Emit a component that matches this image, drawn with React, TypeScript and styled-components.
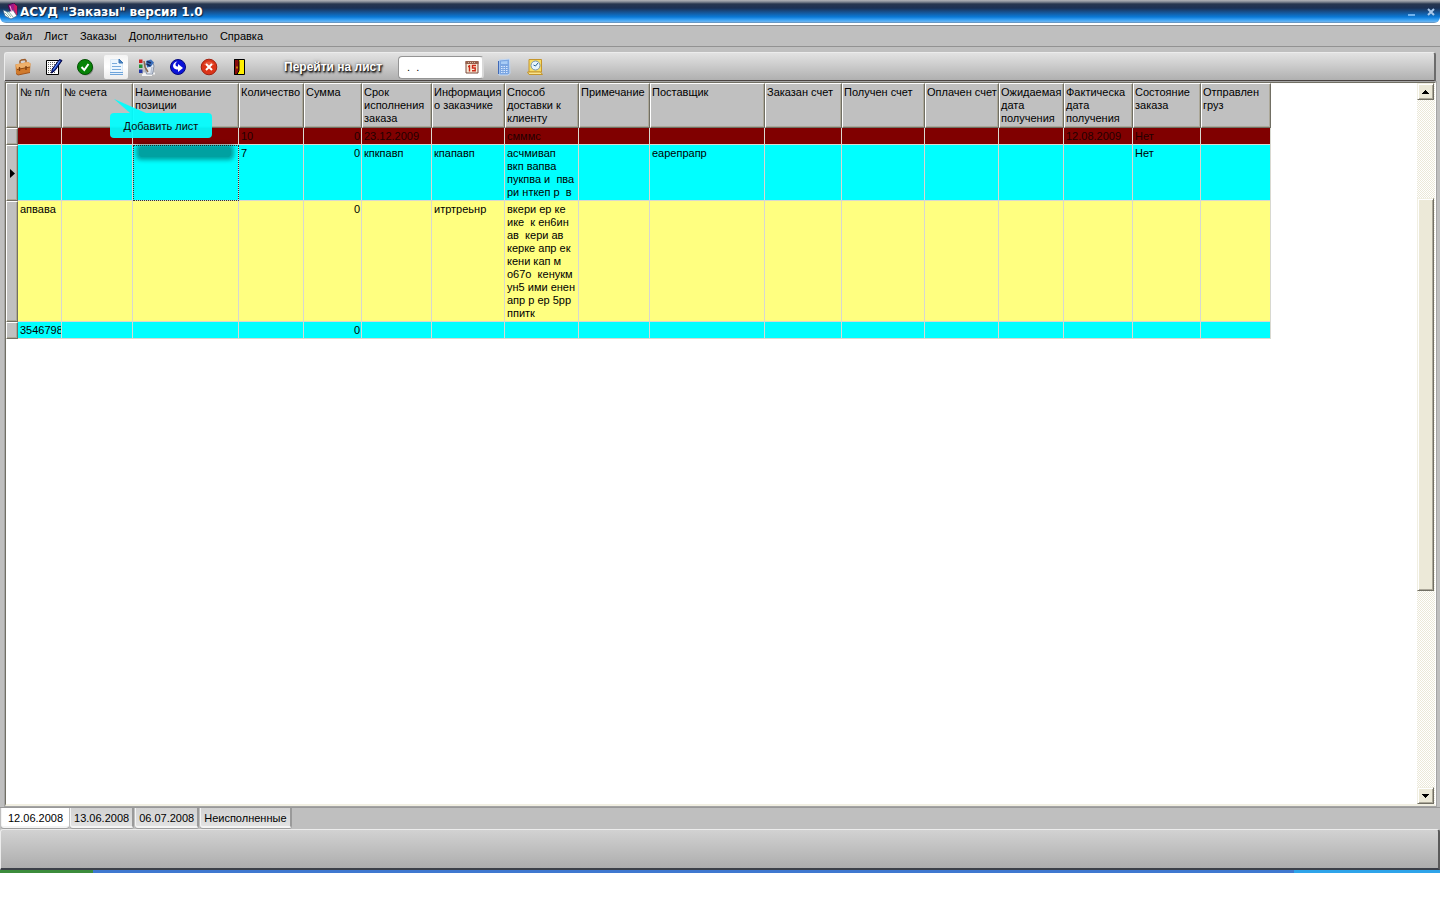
import React from "react";
import styled, { createGlobalStyle, css } from "styled-components";

const Global = createGlobalStyle`
  html, body, #root { height: 100%; }
  body {
    margin: 0;
    background: #fff;
    font-family: "Liberation Sans", Arial, sans-serif;
    font-size: 11px;
    line-height: 13px;
    color: #000;
  }
  *, *::before, *::after { box-sizing: border-box; }
  button, input { font: inherit; color: inherit; margin: 0; }
`;

const Screen = styled.div`
  display: flex;
  flex-direction: column;
  min-height: 100%;
  padding-bottom: 27px;
`;

const Window = styled.main`
  flex: 1;
  display: flex;
  flex-direction: column;
  background: #bfbfbf;
`;

const TitleBar = styled.header`
  display: flex;
  align-items: center;
  height: 23px;
  padding: 0 0 0 3px;
  border-radius: 0 0 6px 6px;
  background: linear-gradient(#b4b6ba 0, #7d8490 2px, #27364f 4px, #1c3154 8px, #17518f 12px, #0a7ad8 17px, #3fa4f4 20px, #6fb4ee 22px, #5c7c9c 23px);
`;

const TitleWrap = styled.div`
  padding-bottom: 2px;
  background: #fff;
  border-bottom: 1px solid #8c8c8c;
`;

const Title = styled.h1`
  flex: 1;
  margin: 0 0 0 2px;
  font-family: "DejaVu Sans", Verdana, sans-serif;
  font-size: 12px;
  line-height: 22px;
  font-weight: bold;
  color: #fff;
  text-shadow: 1px 1px 1px #10203c;
`;

const CaptionButton = styled.button`
  display: flex;
  width: 19px;
  height: 19px;
  padding: 0;
  border: 0;
  background: none;
  align-items: center;
  justify-content: center;
`;

const MenuBar = styled.nav`
  display: flex;
  gap: 12px;
  height: 21px;
  padding: 4px 5px;
  border-bottom: 1px solid #929292;
`;

const MenuItem = styled.button`
  padding: 0;
  border: 0;
  background: none;
`;

const Toolbar = styled.div`
  display: flex;
  align-items: center;
  height: 30px;
  margin: 5px 4px 0;
  padding: 1px 6px 0;
  border: 1px solid #ececec;
  border-right: 2px solid #6c6c6c;
  border-bottom: 2px solid #4a4442;
  border-radius: 3px 3px 0 0;
  background: linear-gradient(#e2e2e2, #cfcfcf 40%, #b0b0b0);
`;

const ToolGroup = styled.div`
  display: flex;
  gap: 7px;
`;

const ToolSlot = styled.div`
  position: relative;
`;

const ToolButton = styled.button<{ $hot?: boolean }>`
  display: flex;
  align-items: center;
  justify-content: center;
  width: 24px;
  height: 24px;
  padding: 0;
  border: 0;
  border-radius: 2px;
  background: ${(p) => (p.$hot ? "linear-gradient(#f4f4f4, #fff 50%, #ececec)" : "none")};
`;

const GotoLabel = styled.label`
  margin: 0 16px 0 32px;
  font-size: 12px;
  font-weight: bold;
  color: #fff;
  text-shadow: 1px 1px 1px #222, 1px 2px 2px #333, 0 0 3px #555;
`;

const DateField = styled.div`
  display: flex;
  align-items: center;
  width: 86px;
  height: 23px;
  margin-right: 8px;
  padding: 0 3px 0 8px;
  border: 1px solid #949494;
  border-right: 2px solid #d8d8d8;
  border-radius: 4px;
  background: #fff;
`;

const DateInput = styled.input`
  flex: 1;
  min-width: 0;
  padding: 0;
  border: 0;
  outline: 0;
  background: none;
  white-space: pre;
`;

const PickButton = styled.button`
  display: flex;
  padding: 0;
  border: 0;
  background: none;
`;

const Tip = styled.div`
  position: absolute;
  z-index: 2;
  left: 6px;
  top: 44px;
  width: 102px;
  opacity: 0.93;
  svg { display: block; }
`;

const TipText = styled.div`
  height: 25px;
  line-height: 27px;
  border-radius: 4px;
  background: #00ffff;
  text-align: center;
  white-space: nowrap;
`;

const TipShadow = styled.div`
  position: absolute;
  z-index: 1;
  left: 35px;
  top: 92px;
  width: 92px;
  height: 10px;
  border-radius: 2px;
  background: rgba(0, 0, 0, 0.37);
  box-shadow: 0 0 4px 3px rgba(0, 0, 0, 0.37);
`;

const GridArea = styled.section`
  flex: 1;
  display: flex;
  margin: 0 4px 0 5px;
  border: 1px solid #716f64;
  border-right-color: #fff;
  border-bottom: 2px solid #f1efe2;
  background: #fff;
  outline: 1px solid #a4a4a4;
  min-height: 400px;
`;

const GridScroll = styled.div`
  flex: 1;
  min-width: 0;
  overflow: hidden;
`;

const Table = styled.table`
  table-layout: fixed;
  width: 1265px;
  border-collapse: separate;
  border-spacing: 0;
`;

const raised = css`
  background: #c0c0c0;
  border: 1px solid #fff;
  border-right-color: #716f64;
  border-bottom-color: #716f64;
  box-shadow: inset -1px -1px 0 #aca899;
`;

const HeadCell = styled.th`
  ${raised}
  height: 45px;
  padding: 2px 0 2px 1px;
  font-weight: normal;
  text-align: left;
  vertical-align: top;
  white-space: pre;
  overflow: hidden;
`;

const Marker = styled.th`
  ${raised}
  padding: 0;
  text-align: center;
  vertical-align: middle;
  svg { display: block; margin: auto; }
`;

type Tone = "overdue" | "cyan" | "yellow";
const tones: Record<Tone, string> = { overdue: "#800000", cyan: "#00ffff", yellow: "#ffff80" };

const Row = styled.tr<{ $tone: Tone }>`
  background: ${(p) => tones[p.$tone]};
  color: ${(p) => (p.$tone === "overdue" ? "#240000" : "#000")};
`;

const Cell = styled.td<{ $num?: boolean; $focus?: boolean }>`
  padding: 2px 1px 1px 2px;
  border-right: 1px solid #d8d8d0;
  border-bottom: 1px solid #d8d8d0;
  vertical-align: top;
  text-align: ${(p) => (p.$num ? "right" : "left")};
  white-space: pre;
  overflow: hidden;
  height: 17px;
  ${(p) => p.$focus && css`
    outline: 1px dotted #303030;
    outline-offset: -1px;
  `}
`;

const ScrollBar = styled.div`
  display: flex;
  flex-direction: column;
  width: 18px;
  padding-right: 1px;
  background: repeating-conic-gradient(#fff 0 25%, #ebe8d8 0 50%) 0 0 / 2px 2px;
`;

const bevel = css`
  background: #ece9d8;
  border: 1px solid #f1efe2;
  border-right-color: #716f64;
  border-bottom-color: #716f64;
  box-shadow: inset 1px 1px 0 #fff, inset -1px -1px 0 #aca899;
`;

const ScrollButton = styled.button`
  ${bevel}
  display: flex;
  align-items: center;
  justify-content: center;
  height: 17px;
  padding: 0;
`;

const ScrollTrack = styled.div`
  flex: 1;
  display: flex;
  flex-direction: column;
`;

const ScrollGap = styled.div<{ $part: number }>`
  flex: ${(p) => p.$part};
`;

const ScrollThumb = styled.div`
  ${bevel}
  flex: 393;
`;

const Tabs = styled.div`
  display: flex;
  gap: 1px;
  height: 22px;
  margin-top: 1px;
  padding-left: 1px;
  border-top: 1px solid #989898;
`;

const Tab = styled.button<{ $active?: boolean }>`
  height: 20px;
  padding: 2px 3px 0;
  border: 1px solid #f4f4f4;
  border-top: 0;
  border-right: 2px solid #9a9a9a;
  border-bottom-width: 2px;
  border-radius: 0 0 3px 3px;
  background: linear-gradient(#d2d2d2, #e2e2e2);
  box-shadow: 0 1px 0 #a0a0a0;
  ${(p) => p.$active && css`
    padding: 2px 4px 0 6px;
    background: #fff;
    border-right-color: #fff;
  `}
`;

const StatusBar = styled.footer`
  height: 41px;
  border: 1px solid #ececec;
  border-right: 2px solid #5a5a5a;
  border-bottom: 2px solid #3c4048;
  border-radius: 3px 3px 0 0;
  background: linear-gradient(#d2d2d2, #adadad);
`;

const Taskbar = styled.div`
  display: grid;
  grid-template-columns: 93px 1fr 146px;
  height: 3px;
`;

const TaskPart = styled.div<{ $tint: string }>`
  background: ${(p) => p.$tint};
`;

const Svg = ({ size = 18, children }: { size?: number; children: React.ReactNode }) => (
  <svg width={size} height={size} viewBox="0 0 18 18" aria-hidden="true">{children}</svg>
);

const BagIcon = () => (
  <Svg>
    <path d="M6 5.500V3L7.500 2 11 1.500l1 1V4.500" fill="none" stroke="#9a5a28" strokeWidth="1.400" />
    <path d="M1.500 6.500L14 4l2.500 1.500-.5 9L4 17l-2-1.500z" fill="#d07a2c" />
    <path d="M1.500 6.500L14 4l2.500 1.500L16 9 3 11z" fill="#eeb06a" />
    <path d="M3 11.500l13-2.500" stroke="#8f4a14" fill="none" />
    <path d="M5.500 9v4M12 8v4" stroke="#7b3d10" strokeWidth="1.300" fill="none" />
    <path d="M2 15.500L4 17l12-2.500" stroke="#a3541a" fill="none" />
  </Svg>
);

const EditIcon = () => (
  <Svg>
    <path d="M1.500 2.500h12v14h-12z" fill="#fff" stroke="#000" />
    <path d="M3 4.500h9M3 6.500h8M3 8.500h6M3 10.500h5M3 12.500h4M3 14.500h8" stroke="#666" strokeDasharray="1 1" />
    <path d="M14.500 1.500l2.500 1-7 10-3.500 2.500.8-4z" fill="#1238a8" stroke="#000040" />
    <path d="M14.500 3L8.500 11.500" stroke="#6f9cff" />
  </Svg>
);

const CheckIcon = () => (
  <Svg>
    <circle cx="10" cy="10" r="7.500" fill="#6b6b6b" opacity=".6" />
    <circle cx="9" cy="9" r="7.500" fill="#078407" stroke="#035003" />
    <path d="M5.500 9l2.800 3L12.500 6" stroke="#fff" strokeWidth="2" fill="none" />
  </Svg>
);

const SheetIcon = () => (
  <Svg>
    <path d="M3.500 1.500h9l3 3V16h-12z" fill="#edf6fe" stroke="#dceaf6" />
    <path d="M12 1l4 4h-4z" fill="#4a86c4" stroke="#3a74b4" />
    <path d="M5 5.500h5M5 8.500h9M5 11.500h9" stroke="#7aabdc" />
    <path d="M3 14.500h13M3 16.500h13" stroke="#6ea4da" />
  </Svg>
);

const ConfigIcon = () => (
  <Svg>
    <path d="M5 15.500h12M4 17h10" stroke="#f4f4f4" strokeWidth="2" />
    <path d="M1 1.500h3.500v3.500H1z" fill="#c82020" />
    <path d="M1 6.500h3.500V10H1z" fill="#1f8e34" />
    <path d="M1 11.500h3.500V15H1z" fill="#2438a8" />
    <path d="M8 5h7l1 3-1.500 8H8.500L7 8z" fill="#e6ebf3" stroke="#8793a8" />
    <path d="M8 3l5-1.500 3 3-3 4-4 1z" fill="#3c70bc" />
    <path d="M9 3.500l4 1.500M8.500 6l4 2" stroke="#16285c" strokeWidth="1.400" />
    <path d="M6 3l1 6 3 5" stroke="#8a6a50" strokeWidth="1.500" fill="none" />
    <path d="M14 9l-1 6" stroke="#b8c2d2" strokeWidth="1.500" />
  </Svg>
);

const UndoIcon = () => (
  <Svg>
    <circle cx="9" cy="9" r="7.500" fill="#0a12d8" stroke="#04087c" />
    <path d="M8.500 3.500C5 4 3.200 7 4.500 9.500 5.200 11 7 11.500 9 11.500V14l5-4-5-4v2.500C7.500 8.500 6.500 8 6.500 6.500 6.500 5 7.500 4.200 8.500 3.500z" fill="#fff" />
  </Svg>
);

const CancelIcon = () => (
  <Svg>
    <circle cx="9" cy="9" r="7.800" fill="#dc3418" stroke="#a02010" />
    <path d="M3.500 7a6 6 0 0 1 11 0z" fill="#f27b60" opacity=".5" />
    <path d="M6 6l6 6M12 6l-6 6" stroke="#fff" strokeWidth="2" />
  </Svg>
);

const DoorIcon = () => (
  <Svg>
    <path d="M3.500 1.500h10v15h-10z" fill="#ffee00" stroke="#000" />
    <path d="M3.500 1.500h4l.5 2v9l-2 4H3.500z" fill="#8a0c0c" stroke="#000" />
    <path d="M6 8.500v2" stroke="#ffee00" />
  </Svg>
);

const CalendarIcon = () => (
  <svg width="14" height="14" viewBox="0 0 14 14" aria-hidden="true">
    <path d="M1 1.500h12v11.500H1z" fill="#f8e8d4" stroke="#7b4a3c" />
    <path d="M.5 1h13v3H.5z" fill="#94604c" />
    <path d="M3 2.500h8" stroke="#d8b8a0" strokeDasharray="1 1" />
    <path d="M4.500 5v6.500M3 6.500h1.500M11 5.500H7.500V8h2.700v2.700H7" stroke="#cc2a18" strokeWidth="1.400" fill="none" />
  </svg>
);

const CalculatorIcon = () => (
  <Svg>
    <path d="M4 2l10.500-1 .5 14.500-2 1.500H4z" fill="#7ba6e2" stroke="#c4d8f2" />
    <path d="M6 3.500l6.500-.5v3H6z" fill="#a8ccf6" />
    <path d="M6 8.500h7M6 10.500h7M6 12.500h7M6 14.500h7" stroke="#d8e8ff" strokeDasharray="1.500 1" />
    <path d="M3.500 3v13" stroke="#3f69b8" />
  </Svg>
);

const ClockIcon = () => (
  <Svg>
    <path d="M3 1.500h12.500V14H3z" fill="#f7dc62" stroke="#c4952c" />
    <path d="M1.500 14h13l2 2.500H3z" fill="#fae58c" stroke="#c4952c" />
    <circle cx="9.500" cy="7.500" r="4.500" fill="#e6f4ff" stroke="#7793ae" />
    <path d="M12 5L9.500 8 7.500 7" stroke="#246090" fill="none" />
  </Svg>
);

const AppIcon = () => (
  <svg width="15" height="17" viewBox="0 0 15 17" aria-hidden="true">
    <path d="M5 2l6-2 3 3v9l-6-1z" fill="#a01888" stroke="#480848" />
    <path d="M11 1l3 2v9l-2-1z" fill="#d02060" />
    <path d="M0 7l5 2 5-2 4 6-6 3-6-3z" fill="#fff" stroke="#406080" strokeWidth=".7" />
    <path d="M3 8l5 6M6 9l4 5M2 10l4 4" stroke="#559988" strokeWidth=".7" />
    <path d="M7 3l2 6" stroke="#f0a0d8" />
  </svg>
);

const Arrow = ({ down }: { down?: boolean }) => (
  <svg width="7" height="4" viewBox="0 0 7 4" shapeRendering="crispEdges" aria-hidden="true">
    <path d={down ? "M0 0h7v1H6v1H5v1H4v1H3V3H2V2H1V1H0z" : "M3 0h1v1h1v1h1v1h1v1H0V3h1V2h1V1h1z"} />
  </svg>
);

const columns: [string, number][] = [
  ["№ п/п", 44],
  ["№ счета", 71],
  ["Наименование\nпозиции", 106],
  ["Количество", 65],
  ["Сумма", 58],
  ["Срок\nисполнения\nзаказа", 70],
  ["Информация\nо заказчике", 73],
  ["Способ\nдоставки к\nклиенту", 74],
  ["Примечание", 71],
  ["Поставщик", 115],
  ["Заказан счет", 77],
  ["Получен счет", 83],
  ["Оплачен счет", 74],
  ["Ожидаемая\nдата\nполучения", 65],
  ["Фактическа\nдата\nполучения", 69],
  ["Состояние\nзаказа", 68],
  ["Отправлен\nгруз", 70],
];

type Order = { tone: Tone; current?: boolean; values: Record<number, string> };

const orders: Order[] = [
  { tone: "overdue", values: { 3: "10", 4: "0", 5: "23.12.2009", 7: "смммс", 14: "12.08.2009", 15: "Нет" } },
  {
    tone: "cyan",
    current: true,
    values: {
      3: "7", 4: "0", 5: "кпкпавп", 6: "кпапавп",
      7: "асчмивап\nвкп вапва\nпукпва и  пва\nри нткеп р  в",
      9: "еарепрапр", 15: "Нет",
    },
  },
  {
    tone: "yellow",
    values: {
      0: "апвава", 4: "0", 6: "итртреьнр",
      7: "вкери ер ке\nике  к ен6ин\nав  кери ав\nкерке апр ек\nкени кап м\nо67о  кенукм\nун5 ими енен\nапр р ер 5рр\nппитк",
    },
  },
  { tone: "cyan", values: { 0: "3546798", 4: "0" } },
];

const tools = [
  { name: "Заказы", Icon: BagIcon },
  { name: "Редактировать", Icon: EditIcon },
  { name: "Выполнить", Icon: CheckIcon },
  { name: "Новый лист", Icon: SheetIcon, tip: "Добавить лист" },
  { name: "Настройка", Icon: ConfigIcon },
  { name: "Вернуть", Icon: UndoIcon },
  { name: "Удалить", Icon: CancelIcon },
  { name: "Выход", Icon: DoorIcon },
];

const menus = ["Файл", "Лист", "Заказы", "Дополнительно", "Справка"];
const sheets = ["12.06.2008", "13.06.2008", "06.07.2008", "Неисполненные"];

export default function App() {
  return (
    <Screen>
      <Global />
      <Window>
        <TitleWrap>
          <TitleBar>
            <AppIcon />
            <Title>АСУД "Заказы" версия 1.0</Title>
            <CaptionButton aria-label="Свернуть">
              <svg width="7" height="9" viewBox="0 0 7 9"><path d="M0 7h7v2H0z" fill="#6fb2ee" /></svg>
            </CaptionButton>
            <CaptionButton aria-label="Закрыть">
              <svg width="8" height="8" viewBox="0 0 8 8"><path d="M1 1l6 6M7 1L1 7" stroke="#a9c8ea" strokeWidth="2" /></svg>
            </CaptionButton>
          </TitleBar>
        </TitleWrap>
        <MenuBar>
          {menus.map((m) => <MenuItem key={m}>{m}</MenuItem>)}
        </MenuBar>
        <Toolbar>
          <ToolGroup>
            {tools.map(({ name, Icon, tip }) => (
              <ToolSlot key={name}>
                <ToolButton $hot={!!tip} aria-label={name}><Icon /></ToolButton>
                {tip && (
                  <>
                    <TipShadow />
                    <Tip role="tooltip">
                      <svg width="40" height="14" viewBox="0 0 40 14"><path d="M4 0L36 14H20z" fill="#00ffff" /></svg>
                      <TipText>{tip}</TipText>
                    </Tip>
                  </>
                )}
              </ToolSlot>
            ))}
          </ToolGroup>
          <GotoLabel htmlFor="sheet-date">Перейти на лист</GotoLabel>
          <DateField>
            <DateInput id="sheet-date" defaultValue=".  ." />
            <PickButton aria-label="Календарь"><CalendarIcon /></PickButton>
          </DateField>
          <ToolGroup>
            <ToolButton aria-label="Калькулятор"><CalculatorIcon /></ToolButton>
            <ToolButton aria-label="Часы"><ClockIcon /></ToolButton>
          </ToolGroup>
        </Toolbar>
        <GridArea>
          <GridScroll>
            <Table>
              <colgroup>
                <col width={12} />
                {columns.map(([name, width]) => <col key={name} width={width} />)}
              </colgroup>
              <thead>
                <tr>
                  <Marker />
                  {columns.map(([name]) => <HeadCell key={name} scope="col">{name}</HeadCell>)}
                </tr>
              </thead>
              <tbody>
                {orders.map((order, r) => (
                  <Row key={r} $tone={order.tone}>
                    <Marker scope="row">
                      {order.current && (
                        <svg width="5" height="9" viewBox="0 0 5 9"><path d="M0 0l5 4.500L0 9z" /></svg>
                      )}
                    </Marker>
                    {columns.map(([name], c) => (
                      <Cell key={name} $num={c === 4} $focus={order.current && c === 2}>
                        {order.values[c]}
                      </Cell>
                    ))}
                  </Row>
                ))}
              </tbody>
            </Table>
          </GridScroll>
          <ScrollBar>
            <ScrollButton aria-label="Вверх"><Arrow /></ScrollButton>
            <ScrollTrack>
              <ScrollGap $part={98} />
              <ScrollThumb />
              <ScrollGap $part={197} />
            </ScrollTrack>
            <ScrollButton aria-label="Вниз"><Arrow down /></ScrollButton>
          </ScrollBar>
        </GridArea>
        <Tabs role="tablist">
          {sheets.map((s, i) => (
            <Tab key={s} role="tab" aria-selected={i === 0} $active={i === 0}>{s}</Tab>
          ))}
        </Tabs>
        <StatusBar />
        <Taskbar>
          <TaskPart $tint="#3c8c3c" />
          <TaskPart $tint="#3f78d0" />
          <TaskPart $tint="#2ea4ea" />
        </Taskbar>
      </Window>
    </Screen>
  );
}
